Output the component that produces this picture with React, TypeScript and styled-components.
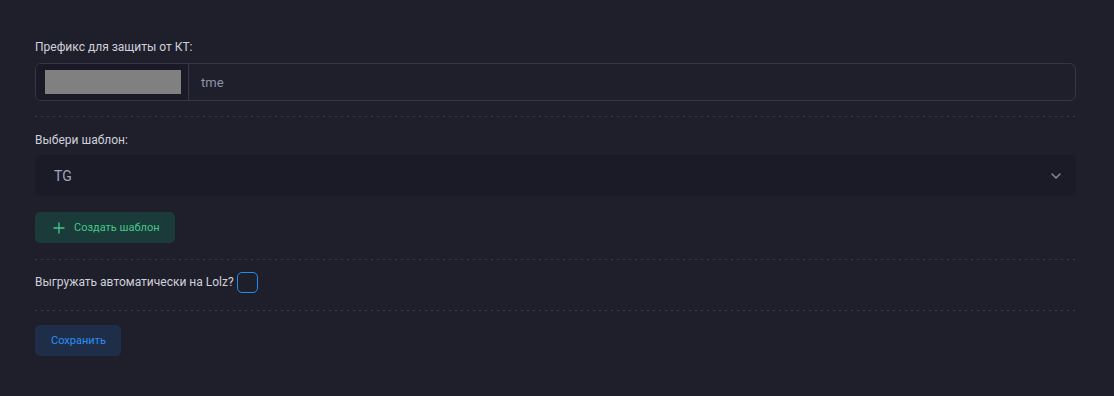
import React from "react";
import styled, { createGlobalStyle } from "styled-components";

const Global = createGlobalStyle`
  html, body { margin: 0; padding: 0; background: #1f1f2c; }
  body { font-family: Roboto, "Noto Sans", Arial, sans-serif; }
  * { box-sizing: border-box; }
`;

const Page = styled.div`
  width: 1114px;
  height: 396px;
  background: #1f1f2c;
  padding: 39px 38px 0 35px;
`;

const Label = styled.div<{ $mb?: number }>`
  font-size: 12px;
  line-height: 16px;
  color: #cfd0da;
  margin-bottom: ${(p) => p.$mb ?? 8}px;
`;

const InputGroup = styled.div`
  display: flex;
  height: 38px;
  border: 1px solid #34344a;
  border-radius: 6px;
  overflow: hidden;
`;

const Addon = styled.div`
  width: 153px;
  flex: none;
  background: #1a1a27;
  border-right: 1px solid #34344a;
  display: flex;
  align-items: center;
  padding-left: 9px;
`;

const Redacted = styled.div`
  width: 136px;
  height: 24px;
  background: #808080;
`;

const TextValue = styled.div`
  flex: 1;
  display: flex;
  align-items: center;
  padding-left: 12px;
  font-size: 13px;
  color: #8e93a8;
`;

const Divider = styled.div<{ $top: number; $bottom: number }>`
  height: 1px;
  background-image: linear-gradient(to right, #3a3a50 0 2px, transparent 2px 6px);
  background-size: 6px 1px;
  background-repeat: repeat-x;
  margin-top: ${(p) => p.$top}px;
  margin-bottom: ${(p) => p.$bottom}px;
`;

const Select = styled.div`
  height: 41px;
  background: #1b1b28;
  border-radius: 5px;
  display: flex;
  align-items: center;
  justify-content: space-between;
  padding: 0 14px 0 19px;
  font-size: 14px;
  color: #a2a4ba;
`;

const Button = styled.button<{ $variant: "green" | "blue" }>`
  display: inline-flex;
  align-items: center;
  gap: 9px;
  height: 31px;
  border: none;
  border-radius: 5px;
  font-family: inherit;
  font-size: 11px;
  padding: ${(p) => (p.$variant === "green" ? "0 15px 0 18px" : "0 15px 0 16px")};
  background: ${(p) => (p.$variant === "green" ? "#1b3a3a" : "#1f2e48")};
  color: ${(p) => (p.$variant === "green" ? "#44c889" : "#2b8ff5")};
  cursor: pointer;
`;

const Row = styled.div`
  display: flex;
  align-items: center;
  gap: 3px;
  height: 20px;
  font-size: 12px;
  color: #cfd0da;
`;

const Checkbox = styled.span`
  width: 21px;
  height: 21px;
  border: 1.5px solid #1e8ef0;
  border-radius: 5px;
  display: inline-block;
`;

const Spacer = styled.div<{ $h: number }>`
  height: ${(p) => p.$h}px;
`;

export default function App() {
  return (
    <Page>
      <Global />
      <Label>Префикс для защиты от КТ:</Label>
      <InputGroup>
        <Addon>
          <Redacted />
        </Addon>
        <TextValue>tme</TextValue>
      </InputGroup>
      <Divider $top={15} $bottom={15} />
      <Label $mb={7}>Выбери шаблон:</Label>
      <Select>
        <span>TG</span>
        <svg width="12" height="12" viewBox="0 0 12 12" fill="none">
          <path d="M2 4l4 4 4-4" stroke="#8e8fa6" strokeWidth="1.4" strokeLinecap="round" strokeLinejoin="round" />
        </svg>
      </Select>
      <Spacer $h={16} />
      <Button $variant="green">
        <svg width="12" height="12" viewBox="0 0 12 12" fill="none">
          <path d="M6 0.5v11M0.5 6h11" stroke="#44c889" strokeWidth="1.3" />
        </svg>
        Создать шаблон
      </Button>
      <Divider $top={16} $bottom={12} />
      <Row>
        Выгружать автоматически на Lolz?
        <Checkbox />
      </Row>
      <Divider $top={18} $bottom={14} />
      <Button $variant="blue">Сохранить</Button>
    </Page>
  );
}
